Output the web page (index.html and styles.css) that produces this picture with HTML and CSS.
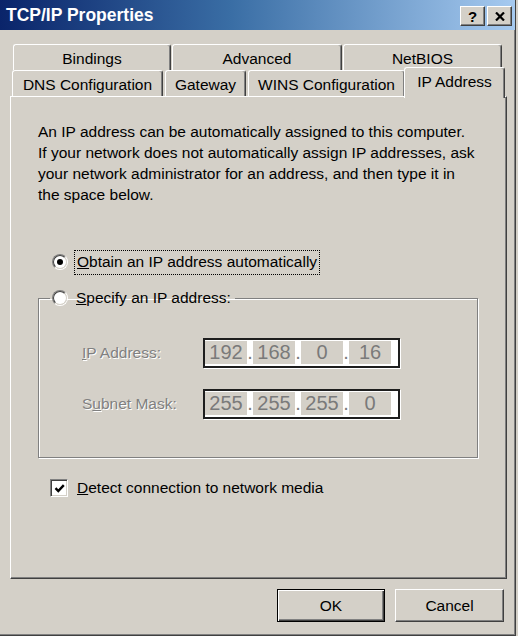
FILE: index.html
```html
<!DOCTYPE html>
<html>
<head>
<meta charset="utf-8">
<title>TCP/IP Properties</title>
<link rel="stylesheet" href="styles.css">
</head>
<body>
<div class="window">
  <div class="titlebar">
    <span class="title">TCP/IP Properties</span>
    <div class="tb-buttons">
      <div class="tb-btn help">?</div>
      <div class="tb-btn close">
        <svg width="10" height="9" viewBox="0 0 10 9"><path d="M1 0.5 L9 8.5 M9 0.5 L1 8.5" stroke="#000" stroke-width="2.2" fill="none"/></svg>
      </div>
    </div>
  </div>
  <div class="content">
    <div class="tabs">
      <div class="tabrow back">
        <div class="tab w-bind">Bindings</div>
        <div class="tab w-adv">Advanced</div>
        <div class="tab w-netb">NetBIOS</div>
      </div>
      <div class="tabrow front">
        <div class="tab w-dns">DNS Configuration</div>
        <div class="tab w-gw">Gateway</div>
        <div class="tab w-wins">WINS Configuration</div>
        <div class="tab selected w-ip">IP Address</div>
      </div>
    </div>
    <div class="panel">
      <p class="intro">An IP address can be automatically assigned to this computer.<br>If your network does not automatically assign IP addresses, ask<br>your network administrator for an address, and then type it in<br>the space below.</p>
      <div class="option-row first">
        <span class="radio checked"><span class="radio-inner"></span></span>
        <span class="option-label focus"><u>O</u>btain an IP address automatically</span>
      </div>
      <fieldset class="group">
        <legend class="group-legend">
          <span class="radio"><span class="radio-inner"></span></span>
          <span class="option-label"><u>S</u>pecify an IP address:</span>
        </legend>
        <div class="field-row">
          <span class="field-label"><u>I</u>P Address:</span>
          <div class="ipfield">
            <span class="seg">192</span><span class="dot">.</span><span class="seg">168</span><span class="dot">.</span><span class="seg">0</span><span class="dot">.</span><span class="seg">16</span>
          </div>
        </div>
        <div class="field-row second">
          <span class="field-label">S<u>u</u>bnet Mask:</span>
          <div class="ipfield">
            <span class="seg">255</span><span class="dot">.</span><span class="seg">255</span><span class="dot">.</span><span class="seg">255</span><span class="dot">.</span><span class="seg">0</span>
          </div>
        </div>
      </fieldset>
      <div class="check-row">
        <span class="checkbox">
          <svg width="13" height="13" viewBox="0 0 13 13"><path d="M2.5 6.2 L5.3 9 L10.8 3.2" stroke="#000" stroke-width="2.4" fill="none"/></svg>
        </span>
        <span class="option-label"><u>D</u>etect connection to network media</span>
      </div>
    </div>
    <div class="buttons">
      <div class="btn default">OK</div>
      <div class="btn">Cancel</div>
    </div>
  </div>
</div>
</body>
</html>
```
FILE: styles.css
```css
* { box-sizing: border-box; }
html, body { margin: 0; padding: 0; }
body {
  background: #d4d0c8;
  font-family: "Liberation Sans", Arial, sans-serif;
  font-size: 15.5px;
  color: #000;
}
.window {
  width: 516px;
  height: 636px;
  display: flex;
  flex-direction: column;
  border-right: 1px solid #404040;
  border-bottom: 1px solid #404040;
  box-shadow: inset -1px -1px #808080;
  background: #d4d0c8;
}
.titlebar {
  flex: none;
  height: 30px;
  background: linear-gradient(to right, #0a246a 0%, #3a6ea5 45%, #a6caf0 100%);
  display: flex;
  align-items: center;
  justify-content: space-between;
  padding: 0 3px 0 6px;
}
.title {
  color: #fff;
  font-weight: bold;
  font-size: 17.5px;
}
.tb-buttons { display: flex; gap: 2px; margin-top: 2px; }
.tb-btn {
  width: 25px;
  height: 20px;
  background: #d4d0c8;
  border: 1px solid;
  border-color: #fff #404040 #404040 #fff;
  box-shadow: inset -1px -1px #808080;
  display: flex;
  align-items: center;
  justify-content: center;
  font-weight: bold;
  font-size: 15px;
  line-height: 1;
}
.content {
  flex: 1;
  display: flex;
  flex-direction: column;
  padding: 14px 8px 0 10px;
}
.tabs { display: flex; flex-direction: column; padding-left: 3px; }
.tabrow { display: flex; height: 26px; }
.tabrow.back { gap: 1px; }
.tabrow.front { margin-left: -1px; gap: 2px; align-items: flex-end; }
.tab {
  height: 26px;
  background: #d4d0c8;
  border-top: 1px solid #fff;
  border-left: 1px solid #fff;
  border-right: 1px solid #404040;
  box-shadow: inset -1px 0 #808080;
  border-radius: 3px 3px 0 0;
  display: flex;
  align-items: center;
  justify-content: center;
  padding-top: 2px;
  white-space: nowrap;
}
.w-bind { width: 158px; }
.w-adv { width: 170px; }
.w-netb { width: 159px; }
.w-dns { width: 151px; }
.w-gw { width: 81px; }
.w-wins { width: 157px; }
.tab.selected {
  width: 101px;
  height: 31px;
  margin-left: -3px;
  margin-bottom: -2px;
  position: relative;
  z-index: 1;
  padding-top: 0;
  padding-bottom: 3px;
}
.panel {
  height: 483px;
  border: 1px solid;
  border-color: #fff #404040 #404040 #fff;
  box-shadow: inset -1px -1px #808080;
  padding: 24px 0 0 27px;
}
.intro {
  margin: 0;
  line-height: 21px;
  white-space: nowrap;
}
.option-row {
  display: flex;
  align-items: center;
  height: 24px;
  margin-top: 45px;
  padding-left: 14px;
}
.radio {
  width: 16px;
  height: 16px;
  border-radius: 50%;
  border: 1px solid;
  border-color: #808080 #fff #fff #808080;
  flex: none;
  display: inline-flex;
}
.radio-inner {
  flex: 1;
  border-radius: 50%;
  border: 1px solid;
  border-color: #404040 #d4d0c8 #d4d0c8 #404040;
  background: #fff;
  display: flex;
  align-items: center;
  justify-content: center;
}
.radio.checked .radio-inner::after {
  content: "";
  width: 6px;
  height: 6px;
  border-radius: 50%;
  background: #000;
}
.option-label {
  margin-left: 6px;
  padding: 2px 2px 3px;
  border: 1px solid transparent;
  white-space: nowrap;
}
.option-label.focus { border: 1px dotted #000; }
.group {
  margin: 12px 28px 0 0;
  padding: 28px 0 38px 0;
  border: 1px solid #808080;
  box-shadow: inset 1px 1px #fff, 1px 1px #fff;
  min-width: 0;
}
.group-legend {
  display: flex;
  align-items: center;
  height: 24px;
  margin-left: 11px;
  padding: 0 2px 0 2px;
}
.group-legend .option-label { margin-left: 6px; padding-left: 1px; padding-right: 1px; }
.field-row {
  display: flex;
  align-items: center;
  padding-left: 43px;
}
.field-row.second { margin-top: 21px; }
.field-label {
  width: 121px;
  color: #808080;
  text-shadow: 1px 1px 0 #fff;
  white-space: nowrap;
}
.ipfield {
  width: 197px;
  height: 30px;
  border: 2px solid #1e1e1e;
  box-shadow: 1px 1px 0 #fff;
  background: #fff;
  display: flex;
  padding: 1px 0 2px 0;
  font-size: 20px;
  color: #7a7a7a;
}
.seg {
  width: 42px;
  background: #d4d0c8;
  display: flex;
  align-items: center;
  justify-content: center;
}
.dot {
  width: 6px;
  display: flex;
  align-items: center;
  justify-content: center;
}
.check-row {
  display: flex;
  align-items: center;
  height: 22px;
  margin-top: 19px;
  padding-left: 12px;
}
.checkbox {
  width: 18px;
  height: 18px;
  border: 1px solid;
  border-color: #808080 #fff #fff #808080;
  box-shadow: inset 1px 1px #404040, inset -1px -1px #d4d0c8;
  background: #fff;
  display: flex;
  align-items: center;
  justify-content: center;
  flex: none;
}
.check-row .option-label { margin-left: 8px; padding-left: 0; }
.buttons {
  display: flex;
  justify-content: flex-end;
  gap: 10px;
  margin-top: 10px;
  padding-right: 3px;
}
.btn {
  width: 109px;
  height: 33px;
  border: 1px solid;
  border-color: #fff #404040 #404040 #fff;
  box-shadow: inset -1px -1px #808080;
  display: flex;
  align-items: center;
  justify-content: center;
}
.btn.default {
  width: 108px;
  border: 1px solid #000;
  box-shadow: inset 1px 1px #fff, inset -1px -1px #404040, inset -2px -2px #808080;
}
```
